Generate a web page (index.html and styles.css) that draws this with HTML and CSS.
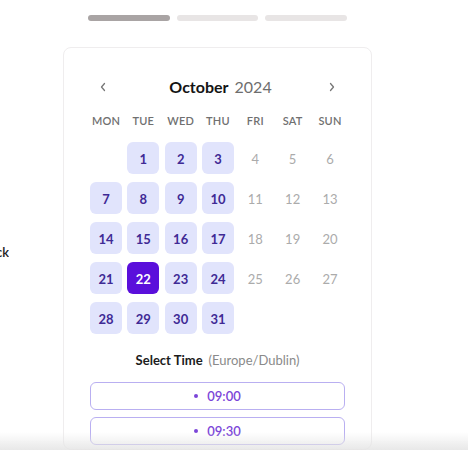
FILE: index.html
```html
<!DOCTYPE html>
<html>
<head>
<meta charset="utf-8">
<link rel="stylesheet" href="styles.css">
</head>
<body>
<div class="page">
  <div class="side"><span class="side-text">Go back</span></div>
  <div class="main">
    <div class="steps">
      <div class="step step-active"></div>
      <div class="step"></div>
      <div class="step"></div>
    </div>
    <div class="card">
      <div class="cal-head">
        <button class="nav"><svg width="8" height="10" viewBox="0 0 8 10"><polyline points="5.5,1.5 2.5,5 5.5,8.5" fill="none" stroke="#777" stroke-width="1.3" stroke-linecap="round" stroke-linejoin="round"/></svg></button>
        <div class="month"><span class="month-name">October</span><span class="year">2024</span></div>
        <button class="nav"><svg width="8" height="10" viewBox="0 0 8 10"><polyline points="2.5,1.5 5.5,5 2.5,8.5" fill="none" stroke="#777" stroke-width="1.3" stroke-linecap="round" stroke-linejoin="round"/></svg></button>
      </div>
      <div class="weekdays">
        <span>MON</span><span>TUE</span><span>WED</span><span>THU</span><span>FRI</span><span>SAT</span><span>SUN</span>
      </div>
      <div class="days">
        <span class="day empty"></span>
        <span class="day avail">1</span><span class="day avail">2</span><span class="day avail">3</span>
        <span class="day off">4</span><span class="day off">5</span><span class="day off">6</span>
        <span class="day avail">7</span><span class="day avail">8</span><span class="day avail">9</span><span class="day avail">10</span>
        <span class="day off">11</span><span class="day off">12</span><span class="day off">13</span>
        <span class="day avail">14</span><span class="day avail">15</span><span class="day avail">16</span><span class="day avail">17</span>
        <span class="day off">18</span><span class="day off">19</span><span class="day off">20</span>
        <span class="day avail">21</span><span class="day selected">22</span><span class="day avail">23</span><span class="day avail">24</span>
        <span class="day off">25</span><span class="day off">26</span><span class="day off">27</span>
        <span class="day avail">28</span><span class="day avail">29</span><span class="day avail">30</span><span class="day avail">31</span>
      </div>
      <div class="time-title"><span class="tt-main">Select Time</span><span class="tt-zone">(Europe/Dublin)</span></div>
      <div class="slots">
        <button class="slot"><span class="dot"></span>09:00</button>
        <button class="slot"><span class="dot"></span>09:30</button>
      </div>
    </div>
  </div>
</div>
<div class="fade"></div>
</body>
</html>
```
FILE: styles.css
```css
* { box-sizing: border-box; }
html, body { margin: 0; padding: 0; background: #fff; }
body {
  font-family: Lato, "Open Sans", sans-serif;
  color: #1a1a1a;
  overflow: hidden;
  height: 450px;
}
.page {
  display: flex;
  align-items: flex-start;
}
.side {
  width: 9px;
  overflow: hidden;
  display: flex;
  justify-content: flex-end;
  margin-top: 243px;
}
.side-text {
  white-space: nowrap;
  font-size: 13px;
  font-weight: 600;
  color: #222;
  line-height: 18px;
}
.main {
  width: 309px;
  margin-left: 54px;
}
.steps {
  display: flex;
  gap: 7px;
  padding: 15px 25px 0 25px;
  height: 47px;
}
.step {
  flex: 1;
  height: 6px;
  border-radius: 3px;
  background: #e8e5e5;
}
.step-active { background: #a9a4a4; }
.card {
  border: 1px solid #efedee;
  border-radius: 8px;
  padding: 27px 26px 4px 26px;
  background: #fff;
}
.cal-head {
  display: flex;
  align-items: center;
  justify-content: space-between;
  height: 24px;
}
.nav {
  width: 26px;
  height: 24px;
  border: none;
  background: none;
  padding: 0;
  display: flex;
  align-items: center;
  justify-content: center;
}
.month {
  font-size: 16px;
  line-height: 24px;
  margin-left: 6px;
}
.month-name { font-weight: 700; color: #141414; }
.year { color: #6e6e6e; margin-left: 6px; }
.weekdays {
  display: grid;
  grid-template-columns: repeat(7, 32px);
  column-gap: 5.33px;
  margin-top: 15px;
  height: 14px;
}
.weekdays span {
  text-align: center;
  font-size: 11px;
  line-height: 14px;
  font-weight: 600;
  color: #707070;
  letter-spacing: 0.2px;
}
.days {
  display: grid;
  grid-template-columns: repeat(7, 32px);
  grid-auto-rows: 32px;
  column-gap: 5.33px;
  row-gap: 8px;
  margin-top: 14px;
}
.day {
  display: flex;
  align-items: center;
  justify-content: center;
  border-radius: 6px;
  font-size: 13px;
  padding-top: 2px;
}
.avail {
  background: #e1e4fc;
  color: #3f2a95;
  font-weight: 700;
}
.selected {
  background: #5a0fdb;
  color: #fff;
  font-weight: 700;
}
.off {
  color: #ababab;
}
.time-title {
  margin-top: 17px;
  text-align: center;
  font-size: 13px;
  line-height: 18px;
}
.tt-main { font-weight: 700; color: #1c1c1c; }
.tt-zone { color: #8a8a8a; margin-left: 6px; }
.slots {
  display: flex;
  flex-direction: column;
  gap: 7px;
  margin-top: 13px;
}
.slot {
  height: 28px;
  border: 1.5px solid #b9aff1;
  border-radius: 6px;
  background: #fff;
  color: #7b45d8;
  font-family: Lato, "Open Sans", sans-serif;
  font-size: 13px;
  font-weight: 600;
  display: flex;
  align-items: center;
  justify-content: center;
  gap: 9px;
  padding: 0;
}
.dot {
  width: 4px;
  height: 4px;
  border-radius: 50%;
  background: #7b45d8;
}
.fade {
  position: fixed;
  left: 0;
  right: 0;
  bottom: 0;
  height: 18px;
  background: linear-gradient(to bottom, rgba(235,235,235,0), rgba(228,228,228,0.85));
  pointer-events: none;
}
```
